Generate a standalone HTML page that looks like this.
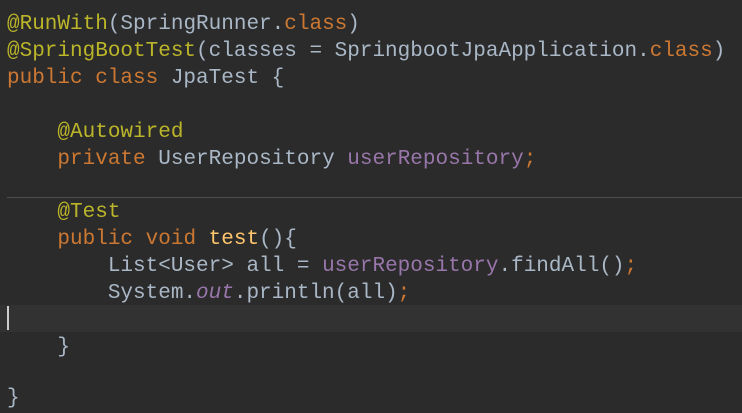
<!DOCTYPE html>
<html><head><style>
html,body{margin:0;padding:0;}
body{width:742px;height:401px;background:#2b2b2b;overflow:hidden;position:relative;font-family:"Liberation Mono",monospace;font-size:21px;color:#a9b7c6;}
.l{position:absolute;left:7px;white-space:pre;line-height:26.8px;height:26.8px;}
.a{color:#bbb529}.k{color:#cc7832}.f{color:#9876aa}.m{color:#ffc66d}.i{color:#9876aa;font-style:italic}
.hl{position:absolute;left:0;top:305px;width:742px;height:27px;background:#323232;}
.sep{position:absolute;left:7px;top:197px;width:735px;height:1px;background:#4e4e4e;}
.cur{position:absolute;left:7px;top:306px;width:2px;height:24px;background:#ccc;}
</style></head><body>
<div class="hl"></div>
<div class="sep"></div>
<div class="cur"></div>
<div class="l" style="top:12px"><span class="a">@RunWith</span>(SpringRunner.<span class="k">class</span>)</div>
<div class="l" style="top:39px"><span class="a">@SpringBootTest</span>(classes = SpringbootJpaApplication.<span class="k">class</span>)</div>
<div class="l" style="top:66px"><span class="k">public class </span>JpaTest {</div>
<div class="l" style="top:120px">    <span class="a">@Autowired</span></div>
<div class="l" style="top:147px">    <span class="k">private </span>UserRepository <span class="f">userRepository</span><span class="k">;</span></div>
<div class="l" style="top:200px">    <span class="a">@Test</span></div>
<div class="l" style="top:227px">    <span class="k">public void </span><span class="m">test</span>(){</div>
<div class="l" style="top:254px">        List&lt;User&gt; all = <span class="f">userRepository</span>.findAll()<span class="k">;</span></div>
<div class="l" style="top:281px">        System.<span class="i">out</span>.println(all)<span class="k">;</span></div>
<div class="l" style="top:335px">    }</div>
<div class="l" style="top:386px">}</div>
</body></html>
